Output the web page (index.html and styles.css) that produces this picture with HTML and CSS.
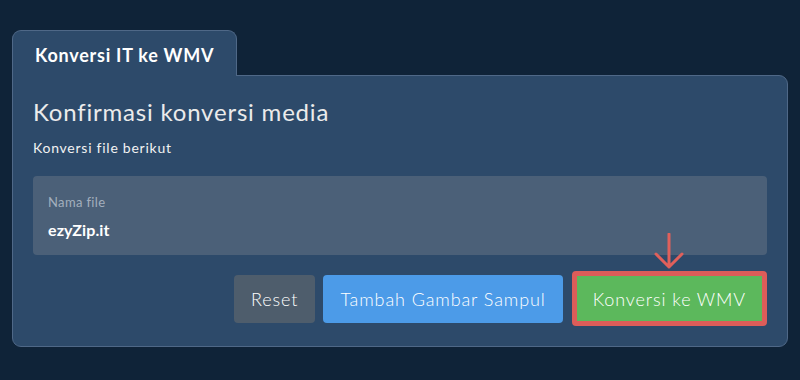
FILE: index.html
```html
<!DOCTYPE html>
<html lang="id">
<head>
    <meta charset="UTF-8">
    <meta name="viewport" content="width=device-width, initial-scale=1.0">
    <title>Konversi IT ke WMV</title>
    <link rel="stylesheet" href="styles.css">
</head>
<body>
    <div class="panel">
        <div class="tabs">
            <div class="tab">Konversi IT ke WMV</div>
        </div>
        <div class="card">
            <h1>Konfirmasi konversi media</h1>
            <p class="subtitle">Konversi file berikut</p>
            <div class="file-box">
                <div class="file-label">Nama file</div>
                <div class="file-name">ezyZip.it</div>
            </div>
            <div class="actions">
                <button class="btn btn-reset">Reset</button>
                <button class="btn btn-cover">Tambah Gambar Sampul</button>
                <div class="convert-wrap">
                    <svg class="arrow" width="30" height="36" viewBox="0 0 30 36">
                        <path d="M15 1 V34 M2 21 L15 34 L28 21" fill="none" stroke="#e0605b" stroke-width="3" stroke-linecap="round" stroke-linejoin="round"/>
                    </svg>
                    <button class="btn btn-convert">Konversi ke WMV</button>
                </div>
            </div>
        </div>
    </div>
</body>
</html>
```

FILE: styles.css
```css
body {
    font-family: Lato, "Open Sans", sans-serif;
    background-color: #0f2338;
    color: #ebebeb;
    margin: 0;
    padding: 30px 12px 0 12px;
    letter-spacing: 0.75px;
}
.tabs {
    display: flex;
}
.tab {
    position: relative;
    z-index: 1;
    background-color: #2d4a6a;
    border: 1px solid #4f6887;
    border-bottom: none;
    border-radius: 9px 9px 0 0;
    padding: 14px 22px 10px 22px;
    margin-bottom: -1px;
    font-size: 18px;
    font-weight: bold;
    line-height: 21px;
    color: #fff;
}
.card {
    background-color: #2d4a6a;
    border: 1px solid #4f6887;
    border-radius: 0 9px 9px 9px;
    padding: 21px 20px 20px 20px;
}
h1 {
    margin: 0;
    font-size: 24px;
    font-weight: normal;
    line-height: 29px;
    letter-spacing: 0.8px;
    color: #ebebeb;
}
.subtitle {
    margin: 13px 0 0 0;
    font-size: 14px;
    line-height: 17px;
    color: #f2f2f2;
}
.file-box {
    margin-top: 20px;
    background-color: #4b6078;
    border-radius: 4px;
    padding: 18px 15px 16px 15px;
}
.file-label {
    font-size: 13px;
    line-height: 16px;
    letter-spacing: 0.35px;
    color: #a3afbd;
}
.file-name {
    margin-top: 10px;
    font-size: 16px;
    font-weight: bold;
    line-height: 19px;
    letter-spacing: 0.1px;
    color: #fff;
}
.actions {
    margin-top: 16px;
    display: flex;
    justify-content: flex-end;
    align-items: center;
    gap: 8px;
}
.btn {
    font-family: Lato, "Open Sans", sans-serif;
    font-size: 18px;
    font-weight: 300;
    letter-spacing: 0.9px;
    color: #fff;
    border: none;
    border-radius: 4px;
    height: 48px;
    padding: 0 17px;
    cursor: pointer;
}
.btn-reset {
    background-color: #4e5d6c;
}
.btn-cover {
    background-color: #4c9be8;
}
.convert-wrap {
    position: relative;
    margin-left: 1px;
}
.btn-convert {
    display: block;
    background-color: #5cb85c;
    border: 5px solid #dc5d59;
    height: 55px;
    padding: 0 16px;
}
.arrow {
    position: absolute;
    left: 50%;
    top: -38px;
    margin-left: -15px;
}
```
